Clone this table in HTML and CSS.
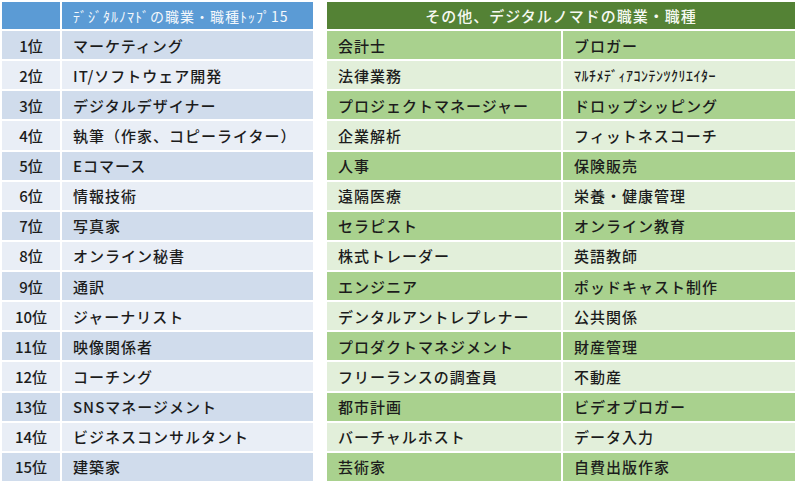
FILE: index.html
```html
<!DOCTYPE html>
<html lang="ja">
<head>
<meta charset="utf-8">
<link rel="stylesheet" href="styles.css">
</head>
<body>
<div class="page">
  <div class="tbl left">
    <div class="cell hblue"></div>
    <div class="cell hblue title">ﾃﾞｼﾞﾀﾙﾉﾏﾄﾞの職業・職種ﾄｯﾌﾟ15</div>
    <div class="cell b1 rank">1位</div><div class="cell b1">マーケティング</div>
    <div class="cell b2 rank">2位</div><div class="cell b2">IT/ソフトウェア開発</div>
    <div class="cell b1 rank">3位</div><div class="cell b1">デジタルデザイナー</div>
    <div class="cell b2 rank">4位</div><div class="cell b2">執筆（作家、コピーライター）</div>
    <div class="cell b1 rank">5位</div><div class="cell b1">Eコマース</div>
    <div class="cell b2 rank">6位</div><div class="cell b2">情報技術</div>
    <div class="cell b1 rank">7位</div><div class="cell b1">写真家</div>
    <div class="cell b2 rank">8位</div><div class="cell b2">オンライン秘書</div>
    <div class="cell b1 rank">9位</div><div class="cell b1">通訳</div>
    <div class="cell b2 rank">10位</div><div class="cell b2">ジャーナリスト</div>
    <div class="cell b1 rank">11位</div><div class="cell b1">映像関係者</div>
    <div class="cell b2 rank">12位</div><div class="cell b2">コーチング</div>
    <div class="cell b1 rank">13位</div><div class="cell b1">SNSマネージメント</div>
    <div class="cell b2 rank">14位</div><div class="cell b2">ビジネスコンサルタント</div>
    <div class="cell b1 rank">15位</div><div class="cell b1">建築家</div>
  </div>
  <div class="tbl right">
    <div class="cell hgreen gtitle">その他、デジタルノマドの職業・職種</div>
    <div class="cell g1">会計士</div><div class="cell g1">ブロガー</div>
    <div class="cell g2">法律業務</div><div class="cell g2 half">ﾏﾙﾁﾒﾃﾞｨｱｺﾝﾃﾝﾂｸﾘｴｲﾀｰ</div>
    <div class="cell g1">プロジェクトマネージャー</div><div class="cell g1">ドロップシッピング</div>
    <div class="cell g2">企業解析</div><div class="cell g2">フィットネスコーチ</div>
    <div class="cell g1">人事</div><div class="cell g1">保険販売</div>
    <div class="cell g2">遠隔医療</div><div class="cell g2">栄養・健康管理</div>
    <div class="cell g1">セラピスト</div><div class="cell g1">オンライン教育</div>
    <div class="cell g2">株式トレーダー</div><div class="cell g2">英語教師</div>
    <div class="cell g1">エンジニア</div><div class="cell g1">ポッドキャスト制作</div>
    <div class="cell g2">デンタルアントレプレナー</div><div class="cell g2">公共関係</div>
    <div class="cell g1">プロダクトマネジメント</div><div class="cell g1">財産管理</div>
    <div class="cell g2">フリーランスの調査員</div><div class="cell g2">不動産</div>
    <div class="cell g1">都市計画</div><div class="cell g1">ビデオブロガー</div>
    <div class="cell g2">バーチャルホスト</div><div class="cell g2">データ入力</div>
    <div class="cell g1">芸術家</div><div class="cell g1">自費出版作家</div>
  </div>
</div>
</body>
</html>
```
FILE: styles.css
```css
html, body {
  margin: 0;
  padding: 0;
  background: #ffffff;
}
body {
  font-family: "Noto Sans CJK JP", "Noto Sans", sans-serif;
  color: #1c1c1c;
  width: 800px;
  height: 486px;
  overflow: hidden;
}
.page {
  display: flex;
  gap: 14px;
  padding: 2px 0 0 2px;
}
.tbl {
  display: grid;
  grid-template-rows: 27px repeat(15, 28.13px);
  row-gap: 2px;
  column-gap: 2px;
}
.left {
  grid-template-columns: 58px 251px;
}
.right {
  grid-template-columns: 234px 232px;
}
.cell {
  display: flex;
  align-items: center;
  padding-left: 11px;
  font-size: 15px;
  font-weight: 500;
  letter-spacing: 1px;
  white-space: nowrap;
  overflow: hidden;
}
.rank {
  justify-content: center;
  padding-left: 0;
  letter-spacing: 0;
}
.hblue {
  background: #5b9bd5;
  color: #f4f8fc;
}
.title {
  font-size: 14px;
  font-weight: 400;
  letter-spacing: 1px;
}
.b1 { background: #d0dcec; }
.b2 { background: #e9eef6; }
.hgreen {
  background: #548235;
  color: #f6f9f2;
}
.gtitle {
  grid-column: 1 / 3;
  justify-content: center;
  padding-left: 0;
  font-size: 15px;
  letter-spacing: 1px;
}
.g1 { background: #a9d18e; }
.g2 { background: #e2efda; }
.half {
  font-size: 14px;
  letter-spacing: 0.5px;
}
```
